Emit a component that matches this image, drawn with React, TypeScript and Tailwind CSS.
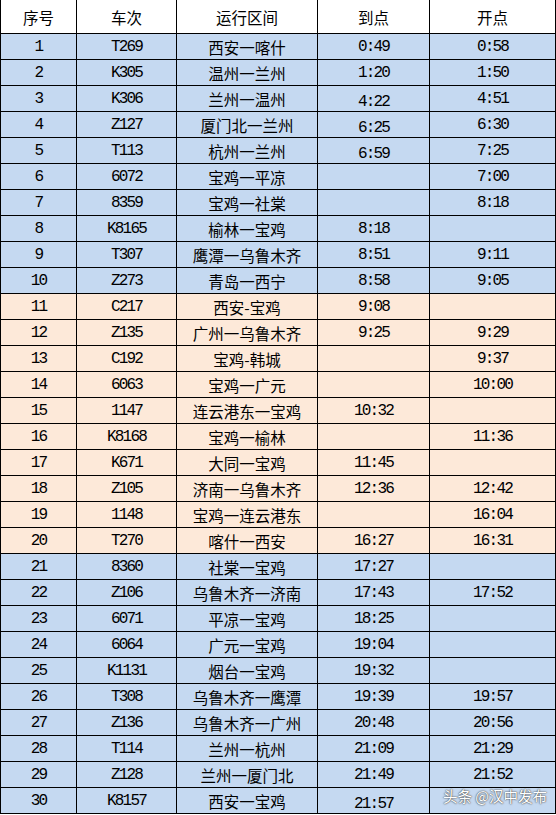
type Row = [string, string, string, string, string];

const rows: Row[] = [
  ["1", "T269", "西安一喀什", "0:49", "0:58"],
  ["2", "K305", "温州一兰州", "1:20", "1:50"],
  ["3", "K306", "兰州一温州", "4:22", "4:51"],
  ["4", "Z127", "厦门北一兰州", "6:25", "6:30"],
  ["5", "T113", "杭州一兰州", "6:59", "7:25"],
  ["6", "6072", "宝鸡一平凉", "", "7:00"],
  ["7", "8359", "宝鸡一社棠", "", "8:18"],
  ["8", "K8165", "榆林一宝鸡", "8:18", ""],
  ["9", "T307", "鹰潭一乌鲁木齐", "8:51", "9:11"],
  ["10", "Z273", "青岛一西宁", "8:58", "9:05"],
  ["11", "C217", "西安-宝鸡", "9:08", ""],
  ["12", "Z135", "广州一乌鲁木齐", "9:25", "9:29"],
  ["13", "C192", "宝鸡-韩城", "", "9:37"],
  ["14", "6063", "宝鸡一广元", "", "10:00"],
  ["15", "1147", "连云港东一宝鸡", "10:32", ""],
  ["16", "K8168", "宝鸡一榆林", "", "11:36"],
  ["17", "K671", "大同一宝鸡", "11:45", ""],
  ["18", "Z105", "济南一乌鲁木齐", "12:36", "12:42"],
  ["19", "1148", "宝鸡一连云港东", "", "16:04"],
  ["20", "T270", "喀什一西安", "16:27", "16:31"],
  ["21", "8360", "社棠一宝鸡", "17:27", ""],
  ["22", "Z106", "乌鲁木齐一济南", "17:43", "17:52"],
  ["23", "6071", "平凉一宝鸡", "18:25", ""],
  ["24", "6064", "广元一宝鸡", "19:04", ""],
  ["25", "K1131", "烟台一宝鸡", "19:32", ""],
  ["26", "T308", "乌鲁木齐一鹰潭", "19:39", "19:57"],
  ["27", "Z136", "乌鲁木齐一广州", "20:48", "20:56"],
  ["28", "T114", "兰州一杭州", "21:09", "21:29"],
  ["29", "Z128", "兰州一厦门北", "21:49", "21:52"],
  ["30", "K8157", "西安一宝鸡", "21:57", ""],
];

// arrival times that sit lower in their cell in the original sheet
const lowArrivals = ["3", "4", "5", "30"];

const grid = "grid grid-cols-[76px_100px_141px_112px_126px]";
const cell = "flex items-center justify-center overflow-hidden border-r border-b border-black leading-[18px]";
const num = "[font-family:'Liberation_Mono',monospace] text-[16px] tracking-[-1.8px] text-black";
const han = "[font-family:'Noto_Sans_CJK_SC',sans-serif] text-[15.5px] text-black";

export default function App() {
  return (
    <div className="relative w-[556px] bg-white">
      <div className="border-l border-black">
        <div className={`${grid} h-[34px] bg-white`}>
          {["序号", "车次", "运行区间", "到点", "开点"].map((h) => (
            <div key={h} className={`${cell} ${han} text-[#111]`}>
              {h}
            </div>
          ))}
        </div>

        {rows.map((r) => {
          const idx = Number(r[0]);
          const bg = idx >= 11 && idx <= 20 ? "bg-[#fde9d9]" : "bg-[#c5d9f1]";
          const low = lowArrivals.includes(r[0]);
          return (
            <div key={r[0]} className={`${grid} h-[26px] grid-rows-[26px] ${bg}`}>
              <div className={`${cell} ${num}`}>{r[0]}</div>
              <div className={`${cell} ${num}`}>{r[1]}</div>
              <div className={`${cell} ${han}`}>{r[2]}</div>
              <div className={`${cell} ${num} ${low ? "pt-[7px]" : ""}`}>{r[3]}</div>
              <div className={`${cell} ${num}`}>{r[4]}</div>
            </div>
          );
        })}
      </div>

      {/* watermark */}
      <div className="absolute left-[443px] top-[786px] [font-family:'Noto_Sans_CJK_SC',sans-serif] text-[14.5px] leading-[20px] text-white [text-shadow:0_0_2px_#444,0_0_1px_#444]">
        头条 @汉中发布
      </div>
    </div>
  );
}
